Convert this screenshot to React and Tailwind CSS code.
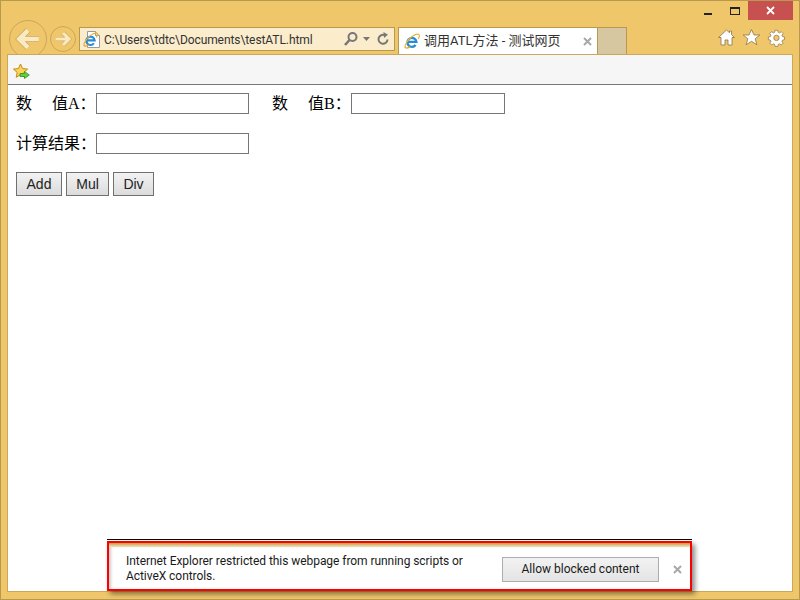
import { useState } from "react";

const uiFont = "font-['Roboto','Noto_Sans_CJK_SC',sans-serif]";

function IeLogo({ size = 16 }) {
  return (
    <svg width={size} height={size} viewBox="0 0 16 16" className="shrink-0">
      <path d="M4.2 8.9h8.2A4.5 4.5 0 1 0 11.6 12" fill="none" stroke="#2b8ad6" strokeWidth="2.3" />
      <path d="M1.3 14.4C.3 12.6 3.6 6.6 8 3.6c2.8-1.8 5.8-3 7-2 .8.8.2 2.5-.6 3.9" fill="none" stroke="#e8b43c" strokeWidth="1.2" strokeLinecap="round" />
      <path d="M1.3 14.4c.8 1 2.8.5 4.4-.5" fill="none" stroke="#e8a92c" strokeWidth="1.3" strokeLinecap="round" />
    </svg>
  );
}

function PageIeIcon() {
  return (
    <div className="relative w-[17px] h-[17px] shrink-0">
      <svg width="17" height="17" viewBox="0 0 17 17" className="block">
        <path d="M4.5.5h8l4 4v12h-12Z" fill="#fff" stroke="#9a9a9a" />
        <path d="M12.5.5v4h4" fill="#e6e6e6" stroke="#9a9a9a" />
      </svg>
      <div className="absolute left-0 top-[1px]">
        <IeLogo size={15} />
      </div>
    </div>
  );
}

function NavArrow({ size, dir }) {
  return (
    <svg width={size} height={size} viewBox="0 0 24 24" className={dir === "right" ? "rotate-180" : ""}>
      <path d="M12 4 4 12l8 8M5 12H22" fill="none" stroke="#c9a75b" strokeWidth="5.6" />
      <path d="M12 4 4 12l8 8M5 12H22" fill="none" stroke="#fbe9c2" strokeWidth="4.2" />
    </svg>
  );
}

function FavStar() {
  return (
    <svg width="17" height="17" viewBox="0 0 17 17">
      <path d="M7.5 1 9.6 5.6l5 .5-3.7 3.3 1 4.8-4.4-2.5-4.3 2.6 1-4.9L.4 6.1l5-.5Z" fill="#fbd45c" stroke="#c98a10" strokeWidth="1" />
      <path d="M7 10.5h4.5V8.5l4.8 3.5-4.8 3.5v-2H7Z" fill="#5fd13e" stroke="#2f8f1e" strokeWidth=".8" />
    </svg>
  );
}

function ToolIcon({ children }) {
  return (
    <svg width="19" height="19" viewBox="0 0 19 19" fill="#fff" stroke="#8a7448" strokeWidth=".8">
      {children}
    </svg>
  );
}

function Field({ width = "w-[153px]" }) {
  return <input className={`${width} h-[21px] border border-[#767676] bg-white`} readOnly />;
}

function PageButton({ label, width }) {
  return (
    <button className={`${width} h-6 border border-[#707070] bg-gradient-to-b from-[#f2f2f2] to-[#dcdcdc] text-[14px] text-[#222] font-['Liberation_Sans',sans-serif]`}>
      {label}
    </button>
  );
}

export default function App() {
  const [, setBar] = useState(true);
  const label = "text-[16px] leading-[21px] text-black font-['Liberation_Serif','Noto_Sans_CJK_SC',serif]";

  return (
    <div className={`relative w-[800px] h-[600px] overflow-hidden flex flex-col bg-[#efc66a] border border-[#b8994f] ${uiFont}`}>
      {/* caption buttons */}
      <div className="h-[19px] shrink-0 flex justify-end items-start pr-[6px]">
        <div className="w-2 h-[2px] mt-[12px] mr-[18px] bg-[#222]" />
        <div className="w-[10px] h-[8px] mt-[6px] mr-[8px] border border-[#222] border-t-2" />
        <div className="w-[45px] h-[19px] bg-[#c75050] flex items-center justify-center">
          <svg width="9" height="9" viewBox="0 0 9 9">
            <path d="M1 1l7 7M8 1 1 8" stroke="#fff" strokeWidth="1.8" />
          </svg>
        </div>
      </div>

      {/* nav row */}
      <div className="h-[34px] shrink-0 flex items-start pl-[8px] pr-[13px] relative">
        <div className="w-[38px] h-[38px] rounded-full border border-[#c9a75b] flex items-center justify-center">
          <NavArrow size={26} dir="left" />
        </div>
        <div className="w-[26px] h-[26px] mt-[6px] ml-[3px] rounded-full border border-[#c9a75b] flex items-center justify-center">
          <NavArrow size={18} dir="right" />
        </div>
        <div className="w-[316px] h-[24px] mt-[7px] ml-[3px] border border-[#b8994f] bg-[#fbeccb] flex items-center pl-[3px] pr-[4px] text-[12px] text-[#333]">
          <PageIeIcon />
          <span className="ml-[4px] pt-[1px] flex-1 whitespace-nowrap tracking-[-0.08px]">C:\Users\tdtc\Documents\testATL.html</span>
          <svg width="16" height="16" viewBox="0 0 16 16" fill="none" stroke="#777" strokeWidth="2">
            <circle cx="9.5" cy="6" r="4" />
            <path d="M6.5 9 2 14" strokeWidth="2.6" />
          </svg>
          <svg width="8" height="5" viewBox="0 0 8 5" className="ml-[4px]">
            <path d="M0 0h7L3.5 4Z" fill="#777" />
          </svg>
          <svg width="14" height="14" viewBox="0 0 14 14" fill="none" stroke="#777" strokeWidth="2" className="ml-[5px]">
            <path d="M11.5 7.5A4.5 4.5 0 1 1 8.5 3" />
            <path d="M7.5 0 12 2.8 8 6Z" fill="#777" stroke="none" />
          </svg>
        </div>
        <div className="w-[199px] h-[27px] mt-[7px] ml-[3px] border-t border-l border-[#b8994f] bg-white flex items-center pl-[5px] pr-[5px] text-[13px] text-[#333]">
          <IeLogo />
          <span className="ml-[4px] flex-1 whitespace-nowrap">调用ATL方法 - 测试网页</span>
          <svg width="9" height="9" viewBox="0 0 9 9">
            <path d="M1 1l7 7M8 1 1 8" stroke="#a8a8a8" strokeWidth="2" />
          </svg>
        </div>
        <div className="w-[30px] h-[27px] mt-[7px] border-t border-x border-[#b8994f] bg-[#d7c7a0]" />
        <div className="ml-auto mt-[8px] flex gap-[6px]">
          <ToolIcon>
            <path d="M9.5 2 1.5 9.5h2.5V17h4v-5h3v5h4V9.5h2.5l-3-2.8V3h-2v1.8Z" />
          </ToolIcon>
          <ToolIcon>
            <path d="M9.5 1.5 12 7h5.8l-4.6 3.8 1.7 6-5.4-3.5-5.4 3.5 1.7-6L1.2 7H7Z" />
          </ToolIcon>
          <ToolIcon>
            <path
              fillRule="evenodd"
              d="M8 1.5h3l.4 2.2 1.5.7 1.9-1.3 2.1 2.1-1.3 1.9.7 1.5 2.2.4v3l-2.2.4-.7 1.5 1.3 1.9-2.1 2.1-1.9-1.3-1.5.7-.4 2.2H8l-.4-2.2-1.5-.7-1.9 1.3-2.1-2.1 1.3-1.9-.7-1.5-2.2-.4v-3l2.2-.4.7-1.5-1.3-1.9 2.1-2.1 1.9 1.3 1.5-.7ZM9.5 7a3 3 0 1 0 0 6 3 3 0 0 0 0-6Z"
              transform="translate(.9 .9) scale(.9)"
            />
          </ToolIcon>
        </div>
      </div>

      {/* browser content */}
      <div className="relative z-10 flex-1 mx-[6px] mb-[7px] flex flex-col border border-[#c9a75b] bg-white">
        <div className="h-[30px] shrink-0 flex items-center pl-[5px] pt-[3px] bg-[#f6f6f6] border-b border-[#777]">
          <FavStar />
        </div>
        <div className="flex flex-col pl-[8px] pt-[8px]">
          <div className="flex items-center">
            <span className={`${label} w-[80px] whitespace-pre`}>数{"\u3000\u00a0"}值A：</span>
            <Field />
            <span className={`${label} ml-[23px] w-[79px] whitespace-pre`}>数{"\u3000\u00a0"}值B：</span>
            <Field width="w-[154px]" />
          </div>
          <div className="flex items-center mt-[19px]">
            <span className={`${label} w-[80px] whitespace-pre`}>计算结果：</span>
            <Field />
          </div>
          <div className="flex gap-1 mt-[18px]">
            <PageButton label="Add" width="w-[46px]" />
            <PageButton label="Mul" width="w-[43px]" />
            <PageButton label="Div" width="w-[41px]" />
          </div>
        </div>
      </div>

      {/* notification bar, floats over the page */}
      <div className="absolute z-20 left-[106px] top-[538px] w-[585px] h-[53px] border-t border-black">
        <div className="mt-[1px] h-[50px] border-2 border-[#f00] bg-white shadow-[3px_3px_5px_rgba(0,0,0,0.45)] flex flex-col">
          <div className="h-[4px] shrink-0 bg-gradient-to-b from-[#c99a3c] to-[#f0e3c0]" />
          <div className="flex-1 flex items-center pl-[17px] pr-[8px] pt-[2px] text-[12px] leading-[15px] text-[#1a1a1a] shadow-[inset_3px_0_3px_-1px_rgba(0,0,0,0.2)]">
            <p className="w-[368px] tracking-[-0.055px]">Internet Explorer restricted this webpage from running scripts or ActiveX controls.</p>
            <button className="w-[157px] h-[25px] ml-[8px] border border-[#adadad] bg-gradient-to-b from-[#f2f2f2] to-[#e4e4e4] text-[12px] text-[#1a1a1a]">
              Allow blocked content
            </button>
            <button className="ml-auto" onClick={() => setBar(false)}>
              <svg width="9" height="9" viewBox="0 0 9 9" className="block">
                <path d="M1 1l7 7M8 1 1 8" stroke="#a8a8a8" strokeWidth="2" />
              </svg>
            </button>
          </div>
        </div>
      </div>
    </div>
  );
}
